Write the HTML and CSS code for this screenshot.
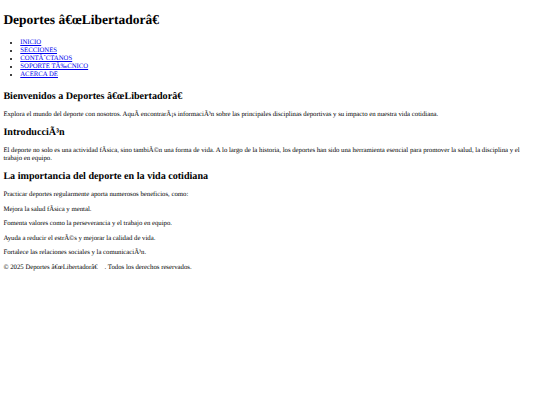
FILE: index.html
```html
<!DOCTYPE html>
<html lang="es">
<head>
<meta charset="utf-8">
<title>Deportes</title>
<link rel="stylesheet" href="styles.css">
</head>
<body class="page">
<header class="site-header">
<h1 class="site-title">Deportes â€œLibertadorâ€</h1>
<nav class="site-nav">
<ul class="nav-list">
<li><a class="nav-link" href="#">INICIO</a></li>
<li><a class="nav-link" href="#">SECCIONES</a></li>
<li><a class="nav-link" href="#">CONTÃˆCTANOS</a></li>
<li><a class="nav-link" href="#">SOPORTE TÃ‰CNICO</a></li>
<li><a class="nav-link" href="#">ACERCA DE</a></li>
</ul>
</nav>
</header>
<main class="content">
<section class="block">
<h2 class="section-title">Bienvenidos a Deportes â€œLibertadorâ€</h2>
<p class="text">Explora el mundo del deporte con nosotros. AquÃ&shy; encontrarÃ¡s informaciÃ³n sobre las principales disciplinas deportivas y su impacto en nuestra vida cotidiana.</p>
</section>
<section class="block">
<h2 class="section-title">IntroducciÃ³n</h2>
<p class="text">El deporte no solo es una actividad fÃ&shy;sica, sino tambiÃ©n una forma de vida. A lo largo de la historia, los deportes han sido una herramienta esencial para promover la salud, la disciplina y el trabajo en equipo.</p>
</section>
<section class="block">
<h2 class="section-title">La importancia del deporte en la vida cotidiana</h2>
<p class="text">Practicar deportes regularmente aporta numerosos beneficios, como:</p>
<p class="text">Mejora la salud fÃ&shy;sica y mental.</p>
<p class="text">Fomenta valores como la perseverancia y el trabajo en equipo.</p>
<p class="text">Ayuda a reducir el estrÃ©s y mejorar la calidad de vida.</p>
<p class="text">Fortalece las relaciones sociales y la comunicaciÃ³n.</p>
</section>
</main>
<footer class="site-footer">
<p class="text">© 2025 Deportes â€œLibertadorâ€<span class="gap"></span>. Todos los derechos reservados.</p>
</footer>
</body>
</html>
```
FILE: styles.css
```css
html {
  background: #ffffff;
}
.page {
  margin: 3.375px;
  font-family: "Liberation Serif", "Times New Roman", serif;
  font-size: 6.75px;
  line-height: 1.15;
  color: #000000;
  text-rendering: geometricPrecision;
}
.site-title {
  font-size: 13.5px;
  font-weight: bold;
  margin: 9.05px 0 11px;
}
.nav-list {
  margin: 6.75px 0 12px;
  padding-left: 16.875px;
  list-style: disc;
  line-height: 8px;
}
.nav-link {
  color: #0000ee;
  text-decoration: underline;
}
.section-title {
  font-size: 10.125px;
  font-weight: bold;
  margin: 8.4px 0;
}
.text {
  margin: 6.75px 0;
}
.gap {
  display: inline-block;
  width: 7px;
}
```
